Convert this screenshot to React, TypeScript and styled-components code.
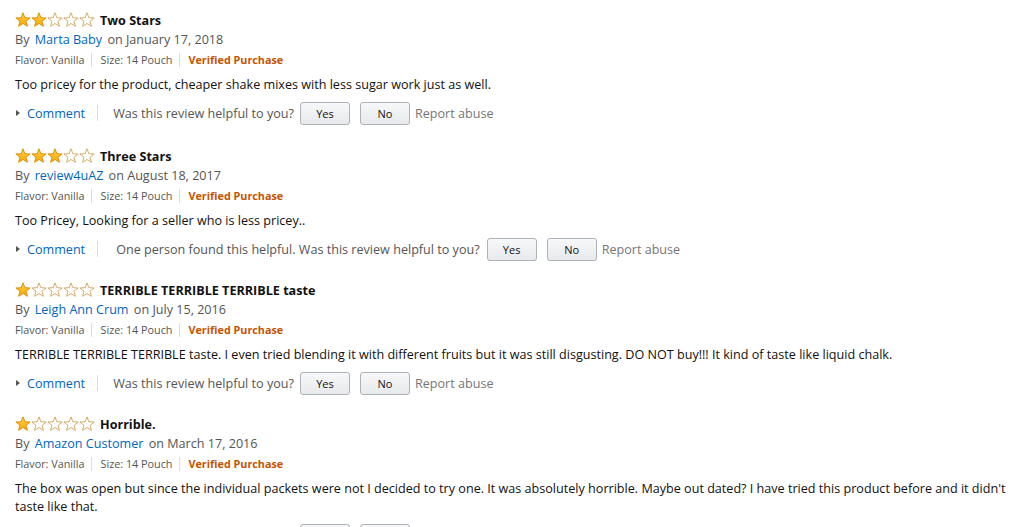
import React from "react";
import styled, { createGlobalStyle } from "styled-components";

type Review = {
  stars: number;
  title: string;
  author: string;
  date: string;
  body: string;
  helpful?: string;
};

const reviews: Review[] = [
  {
    stars: 2,
    title: "Two Stars",
    author: "Marta Baby",
    date: "January 17, 2018",
    body: "Too pricey for the product, cheaper shake mixes with less sugar work just as well.",
  },
  {
    stars: 3,
    title: "Three Stars",
    author: "review4uAZ",
    date: "August 18, 2017",
    body: "Too Pricey, Looking for a seller who is less pricey..",
    helpful: "One person found this helpful.",
  },
  {
    stars: 1,
    title: "TERRIBLE TERRIBLE TERRIBLE taste",
    author: "Leigh Ann Crum",
    date: "July 15, 2016",
    body: "TERRIBLE TERRIBLE TERRIBLE taste. I even tried blending it with different fruits but it was still disgusting. DO NOT buy!!! It kind of taste like liquid chalk.",
  },
  {
    stars: 1,
    title: "Horrible.",
    author: "Amazon Customer",
    date: "March 17, 2016",
    body: "The box was open but since the individual packets were not I decided to try one. It was absolutely horrible. Maybe out dated? I have tried this product before and it didn't taste like that.",
  },
];

const STAR = "8,0.8 9.88,5.71 15.13,5.98 11.04,9.29 12.41,14.37 8,11.5 3.59,14.37 4.96,9.29 0.87,5.98 6.12,5.71";

const Star = ({ filled }: { filled: boolean }) => (
  <svg width="16" height="16" viewBox="0 0 16 16">
    <defs>
      <linearGradient id="gold" x1="0" y1="0" x2="0" y2="1">
        <stop offset="0" stopColor="#ffd54a" />
        <stop offset="1" stopColor="#f7a400" />
      </linearGradient>
    </defs>
    <polygon
      points={STAR}
      fill={filled ? "url(#gold)" : "#fff"}
      stroke={filled ? "#dd8a00" : "#cfa35a"}
      strokeWidth="0.9"
      strokeLinejoin="round"
    />
  </svg>
);

const App = () => {
  return (
    <>
      <GlobalStyle />
      <List>
        {reviews.map((r) => (
          <Item key={r.title}>
            <TitleRow>
              <Stars>
                {[0, 1, 2, 3, 4].map((i) => (
                  <Star key={i} filled={i < r.stars} />
                ))}
              </Stars>
              <Title>{r.title}</Title>
            </TitleRow>
            <Byline>
              By <Author href="#">{r.author}</Author> on {r.date}
            </Byline>
            <Meta>
              <span>Flavor: Vanilla</span>
              <MetaSep />
              <span>Size: 14 Pouch</span>
              <MetaSep />
              <Verified>Verified Purchase</Verified>
            </Meta>
            <Body>{r.body}</Body>
            <Actions>
              <Caret />
              <CommentLink href="#">Comment</CommentLink>
              <ActionSep />
              <Helpful $wide={!!r.helpful}>
                {r.helpful ? `${r.helpful} ` : ""}Was this review helpful to you?
              </Helpful>
              <VoteButton>Yes</VoteButton>
              <VoteButton>No</VoteButton>
              <Report>Report abuse</Report>
            </Actions>
          </Item>
        ))}
      </List>
    </>
  );
};

export default App;

const GlobalStyle = createGlobalStyle`
  body {
    margin: 0;
    background: #ffffff;
    font-family: "Open Sans", "Noto Sans", Arial, sans-serif;
    color: #111111;
    overflow: hidden;
  }
`;

const List = styled.div`
  padding: 10px 8px 0 15px;
`;

const Item = styled.div`
  margin-bottom: 19px;
  &:first-child {
    margin-bottom: 21px;
  }
`;

const TitleRow = styled.div`
  display: flex;
  align-items: center;
  height: 20px;
`;

const Stars = styled.div`
  display: flex;
  margin-right: 5px;
  svg {
    display: block;
  }
`;

const Title = styled.span`
  font-size: 12.6px;
  font-weight: 700;
  color: #111;
`;

const Byline = styled.div`
  height: 20px;
  line-height: 20px;
  font-size: 12.6px;
  color: #555;
`;

const Author = styled.a`
  color: #0066c0;
  text-decoration: none;
  margin: 0 2px;
`;

const Meta = styled.div`
  display: flex;
  align-items: center;
  height: 19px;
  font-size: 10.8px;
  color: #555;
`;

const MetaSep = styled.i`
  display: inline-block;
  width: 1px;
  height: 14px;
  background: #ddd;
  margin: 0 8px 0 7px;
`;

const Verified = styled.span`
  color: #c45500;
  font-weight: 700;
`;

const Body = styled.div`
  margin-top: 7px;
  font-size: 12.6px;
  line-height: 18px;
  color: #111;
`;

const Actions = styled.div`
  display: flex;
  align-items: center;
  height: 24px;
  margin-top: 7px;
  font-size: 12.6px;
`;

const Caret = styled.i`
  width: 0;
  height: 0;
  border-left: 4px solid #555;
  border-top: 3.5px solid transparent;
  border-bottom: 3.5px solid transparent;
  margin: 0 7px 0 1px;
`;

const CommentLink = styled.a`
  color: #0066c0;
  text-decoration: none;
`;

const ActionSep = styled.i`
  width: 1px;
  height: 16px;
  background: #ddd;
  margin: 0 15px 0 12px;
`;

const Helpful = styled.span<{ $wide: boolean }>`
  color: #555;
  margin-left: ${(p) => (p.$wide ? "3px" : "0")};
  margin-right: ${(p) => (p.$wide ? "7px" : "6px")};
`;

const VoteButton = styled.button`
  width: 50px;
  height: 23px;
  margin-right: 10px;
  padding: 0;
  font-family: inherit;
  font-size: 11px;
  color: #111;
  border: 1px solid #adb1b8;
  border-radius: 3px;
  background: linear-gradient(#f7f8fa, #e7e9ec);
  &:last-of-type {
    margin-right: 5px;
  }
`;

const Report = styled.span`
  color: #767676;
`;
